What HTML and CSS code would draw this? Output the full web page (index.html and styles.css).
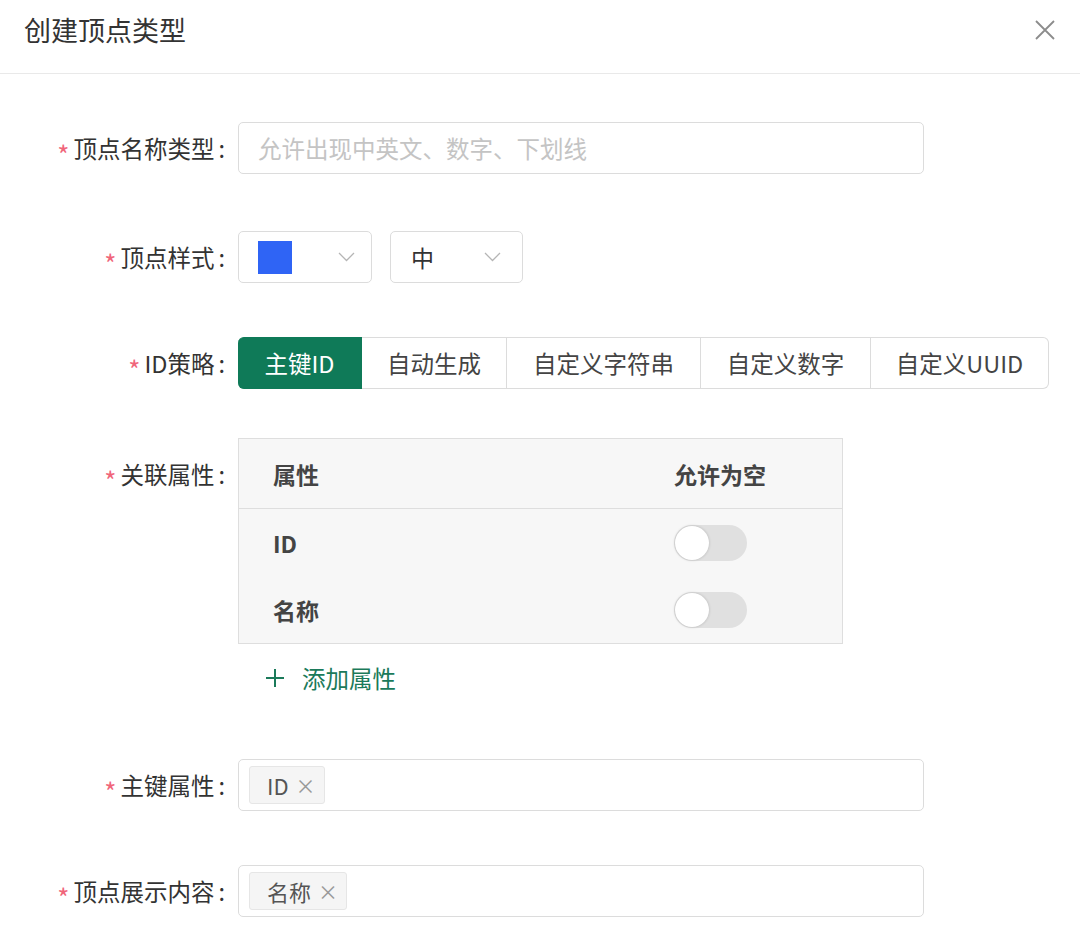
FILE: index.html
```html
<!DOCTYPE html>
<html lang="zh-CN">

<head>
    <meta charset="UTF-8">
    <meta name="viewport" content="width=device-width, initial-scale=1.0">
    <title>创建顶点类型</title>
    <link rel="stylesheet" href="styles.css">
</head>

<body>
    <div class="dialog">
        <header class="dialog-header">
            <h1>创建顶点类型</h1>
            <span class="close-btn">
                <svg width="20" height="20" viewBox="0 0 20 20">
                    <path d="M1 1 L19 19 M19 1 L1 19" stroke="#8c8c8c" stroke-width="1.8" fill="none"/>
                </svg>
            </span>
        </header>

        <form class="dialog-form">
            <div class="form-row row-name">
                <label class="form-label"><span class="req">*</span>顶点名称类型<span class="colon">:</span></label>
                <div class="text-input placeholder">允许出现中英文、数字、下划线</div>
            </div>

            <div class="form-row row-style">
                <label class="form-label"><span class="req">*</span>顶点样式<span class="colon">:</span></label>
                <div class="select color-select">
                    <span class="swatch"></span>
                    <svg class="chevron" width="17" height="10" viewBox="0 0 17 10">
                        <path d="M1 1 L8.5 8.5 L16 1" stroke="#b5b5b5" stroke-width="1.3" fill="none"/>
                    </svg>
                </div>
                <div class="select size-select">
                    <span>中</span>
                    <svg class="chevron" width="17" height="10" viewBox="0 0 17 10">
                        <path d="M1 1 L8.5 8.5 L16 1" stroke="#b5b5b5" stroke-width="1.3" fill="none"/>
                    </svg>
                </div>
            </div>

            <div class="form-row row-id">
                <label class="form-label"><span class="req">*</span>ID策略<span class="colon">:</span></label>
                <div class="segmented">
                    <span class="seg active" style="width: 124px">主键ID</span>
                    <span class="seg" style="width: 145px">自动生成</span>
                    <span class="seg" style="width: 194px">自定义字符串</span>
                    <span class="seg" style="width: 170px">自定义数字</span>
                    <span class="seg" style="width: 178px">自定义UUID</span>
                </div>
            </div>

            <div class="form-row row-props">
                <label class="form-label"><span class="req">*</span>关联属性<span class="colon">:</span></label>
                <div class="props-block">
                    <table class="props-table">
                        <thead>
                            <tr>
                                <th class="col-name">属性</th>
                                <th>允许为空</th>
                            </tr>
                        </thead>
                        <tbody>
                            <tr>
                                <td class="col-name">ID</td>
                                <td><span class="toggle"><span class="knob"></span></span></td>
                            </tr>
                            <tr>
                                <td class="col-name">名称</td>
                                <td><span class="toggle"><span class="knob"></span></span></td>
                            </tr>
                        </tbody>
                    </table>
                    <div class="add-prop">
                        <svg width="20" height="20" viewBox="0 0 20 20">
                            <path d="M10 1 V19 M1 10 H19" stroke="#1b7a5a" stroke-width="2" fill="none"/>
                        </svg>
                        <span>添加属性</span>
                    </div>
                </div>
            </div>

            <div class="form-row row-key">
                <label class="form-label"><span class="req">*</span>主键属性<span class="colon">:</span></label>
                <div class="text-input tags">
                    <span class="tag">ID<span class="tag-x">×</span></span>
                </div>
            </div>

            <div class="form-row row-display">
                <label class="form-label"><span class="req">*</span>顶点展示内容<span class="colon">:</span></label>
                <div class="text-input tags">
                    <span class="tag">名称<span class="tag-x">×</span></span>
                </div>
            </div>
        </form>
    </div>
</body>

</html>
```

FILE: styles.css
```css
body {
    margin: 0;
    padding: 0;
    background-color: #fff;
    font-family: "Noto Sans CJK SC", "Noto Sans", sans-serif;
    color: #333;
}

.dialog {
    width: 1080px;
    height: 945px;
    overflow: hidden;
}

.dialog-header {
    height: 73px;
    border-bottom: 1px solid #e9e9e9;
    display: flex;
    align-items: center;
    justify-content: space-between;
    padding: 0 25px 0 24px;
}

.dialog-header h1 {
    margin: 0;
    font-size: 27px;
    font-weight: 400;
    color: #333;
    margin-top: -15px;
}

.close-btn {
    display: flex;
    margin-top: -13px;
}

.dialog-form {
    padding-top: 48px;
}

.form-row {
    display: flex;
    align-items: flex-start;
}

.form-label {
    width: 228px;
    flex-shrink: 0;
    height: 52px;
    display: flex;
    align-items: center;
    justify-content: flex-end;
    font-size: 23.5px;
    color: #333;
    padding-right: 10px;
    box-sizing: content-box;
}

.req {
    color: #f0657a;
    font-size: 26px;
    margin-right: 4px;
    margin-top: 10px;
}

.colon {
    margin-left: 4px;
    margin-right: 3px;
}

.text-input {
    width: 686px;
    height: 52px;
    box-sizing: border-box;
    border: 1px solid #dcdcdc;
    border-radius: 5px;
    display: flex;
    align-items: center;
    font-size: 23.5px;
}

.placeholder {
    color: #c4c4c4;
    padding-left: 19px;
}

.row-style {
    margin-top: 57px;
}

.select {
    height: 52px;
    box-sizing: border-box;
    border: 1px solid #dcdcdc;
    border-radius: 5px;
    display: flex;
    align-items: center;
    justify-content: space-between;
    font-size: 23px;
    color: #333;
}

.color-select {
    width: 134px;
    padding: 0 16px 0 19px;
}

.swatch {
    width: 34px;
    height: 33px;
    background-color: #2f64f5;
}

.size-select {
    width: 133px;
    margin-left: 18px;
    padding: 0 21px 0 20px;
}

.row-id {
    margin-top: 54px;
}

.segmented {
    display: flex;
    height: 52px;
}

.seg {
    box-sizing: border-box;
    display: flex;
    align-items: center;
    justify-content: center;
    font-size: 23.5px;
    color: #444;
    border: 1px solid #dcdcdc;
    border-left: none;
}

.seg:last-child {
    border-radius: 0 6px 6px 0;
}

.seg.active {
    background-color: #0f7a58;
    border-color: #0f7a58;
    color: #fff;
    border-radius: 6px 0 0 6px;
}

.row-props {
    margin-top: 49px;
}

.row-props .form-label {
    height: 72px;
}

.props-table {
    width: 605px;
    border-collapse: collapse;
    background-color: #f7f7f7;
    border: 1px solid #dedede;
    font-size: 23px;
    color: #444;
}

.props-table th {
    height: 69px;
    text-align: left;
    font-weight: 700;
    border-bottom: 1px solid #dedede;
    padding: 0;
}

.props-table td {
    height: 67px;
    padding: 0;
    font-weight: 700;
}

.props-table .col-name {
    width: 401px;
    padding-left: 34px;
}

.toggle {
    display: block;
    width: 73px;
    height: 36px;
    border-radius: 18px;
    background-color: #e0e0e0;
    position: relative;
}

.knob {
    position: absolute;
    top: 1px;
    left: 1px;
    width: 34px;
    height: 34px;
    border-radius: 50%;
    background-color: #fff;
    box-shadow: 0 0 3px rgba(0, 0, 0, 0.2);
}

.add-prop {
    display: flex;
    align-items: center;
    height: 40px;
    margin-top: 14px;
    padding-left: 27px;
    font-size: 23.5px;
    color: #1b7a5a;
}

.add-prop svg {
    margin-right: 17px;
}

.row-key {
    margin-top: 61px;
}

.row-display {
    margin-top: 54px;
}

.tags {
    padding-left: 10px;
}

.tag {
    height: 38px;
    box-sizing: border-box;
    display: flex;
    align-items: center;
    background-color: #f5f5f5;
    border: 1px solid #e6e6e6;
    border-radius: 3px;
    padding: 0 8px 0 17px;
    font-size: 22px;
    color: #555;
}

.tag-x {
    color: #999;
    font-size: 20px;
    margin-left: 7px;
}
```
